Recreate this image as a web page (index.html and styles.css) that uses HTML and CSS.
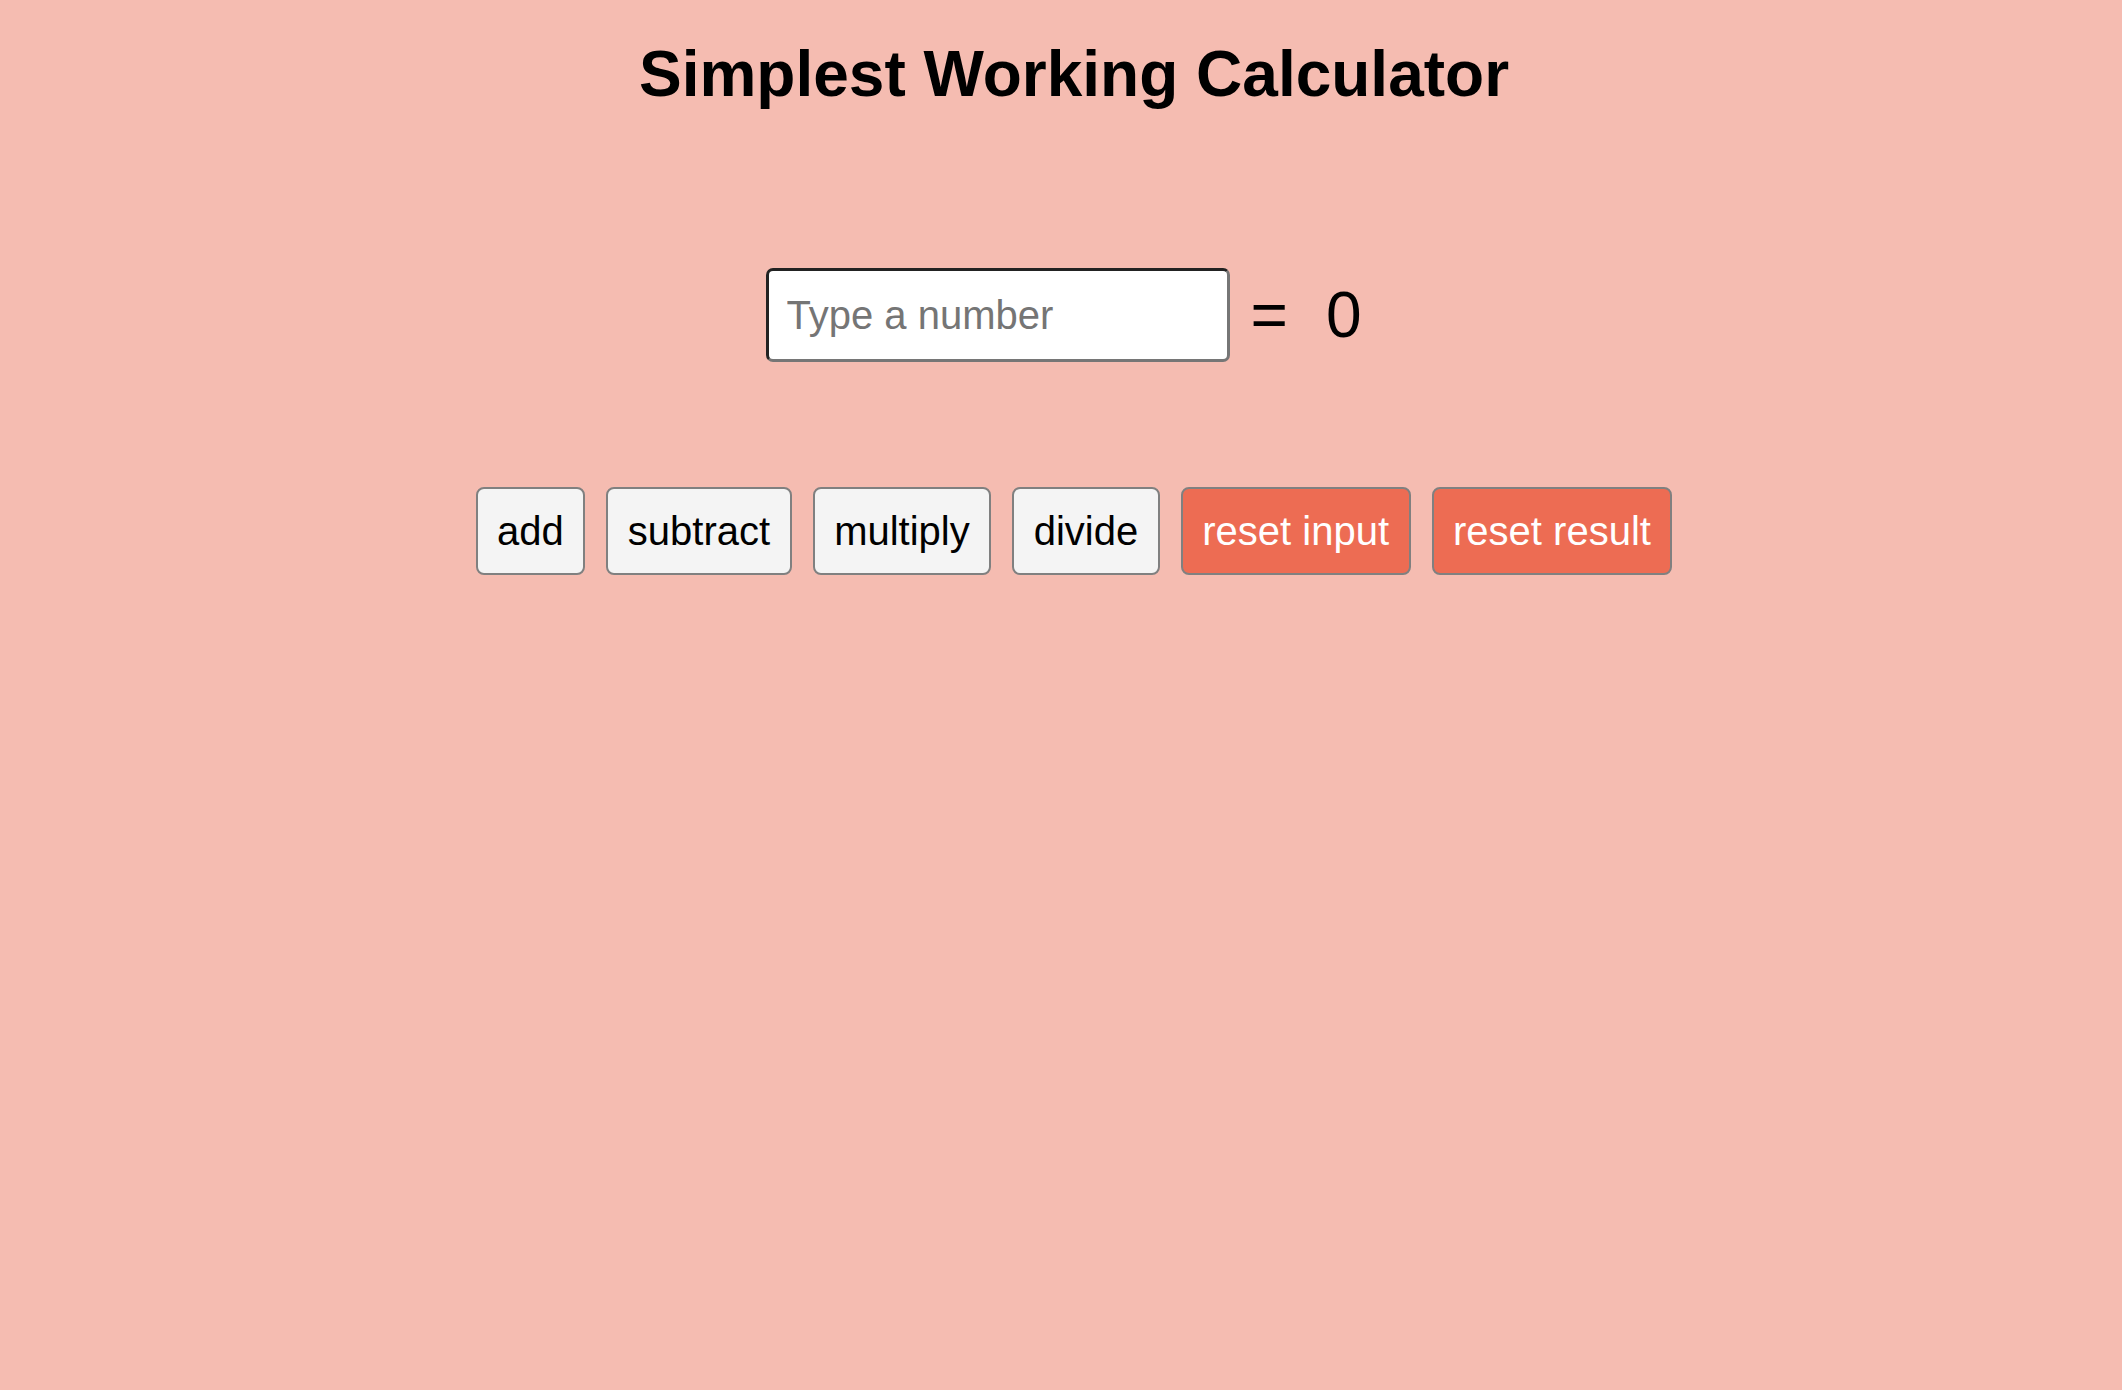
FILE: index.html
```html
<!DOCTYPE html>
<html lang="en">
<head>
<meta charset="utf-8">
<title>Simplest Working Calculator</title>
<link rel="stylesheet" href="styles.css">
</head>
<body>
<main class="app">
  <h1 class="title">Simplest Working Calculator</h1>
  <form class="calc-row">
    <input class="number-input" type="number" placeholder="Type a number">
    <span class="equals">=</span>
    <span class="result">0</span>
  </form>
  <div class="button-row">
    <button class="btn" type="button">add</button>
    <button class="btn" type="button">subtract</button>
    <button class="btn" type="button">multiply</button>
    <button class="btn" type="button">divide</button>
    <button class="btn btn-reset" type="button">reset input</button>
    <button class="btn btn-reset" type="button">reset result</button>
  </div>
</main>
</body>
</html>
```
FILE: styles.css
```css
html, body {
  margin: 0;
  padding: 0;
  background: #f5bcb1;
  min-height: 100%;
}

body {
  font-family: "Liberation Sans", Arial, Helvetica, sans-serif;
  color: #000;
}

.app {
  display: flex;
  flex-direction: column;
  align-items: center;
  padding-left: 26px;
  padding-top: 38px;
}

.title {
  margin: 0;
  font-size: 64px;
  font-weight: bold;
  line-height: 73px;
}

.calc-row {
  display: flex;
  align-items: center;
  margin: 157px 0 0;
  padding-right: 21px;
}

.number-input {
  box-sizing: border-box;
  width: 464px;
  height: 94px;
  padding: 0 18px;
  border-style: solid;
  border-width: 3px;
  border-color: #222 #767676 #767676 #222;
  border-radius: 7px;
  background: #fff;
  font-family: "Liberation Sans", Arial, Helvetica, sans-serif;
  font-size: 40px;
  color: #000;
  outline: none;
}

.number-input::placeholder {
  color: #757575;
}

.number-input::-webkit-outer-spin-button,
.number-input::-webkit-inner-spin-button {
  -webkit-appearance: none;
  margin: 0;
}

.equals {
  margin-left: 21px;
  font-size: 64px;
}

.result {
  margin-left: 38px;
  font-size: 64px;
}

.button-row {
  display: flex;
  gap: 21px;
  margin-top: 125px;
}

.btn {
  box-sizing: border-box;
  height: 88px;
  padding: 0 19.5px;
  border: 2px solid #808080;
  border-radius: 8px;
  background: #f4f4f4;
  font-family: "Liberation Sans", Arial, Helvetica, sans-serif;
  font-size: 40px;
  line-height: 46px;
  color: #000;
}

.btn-reset {
  background: #ed6c53;
  color: #fff;
}
```
